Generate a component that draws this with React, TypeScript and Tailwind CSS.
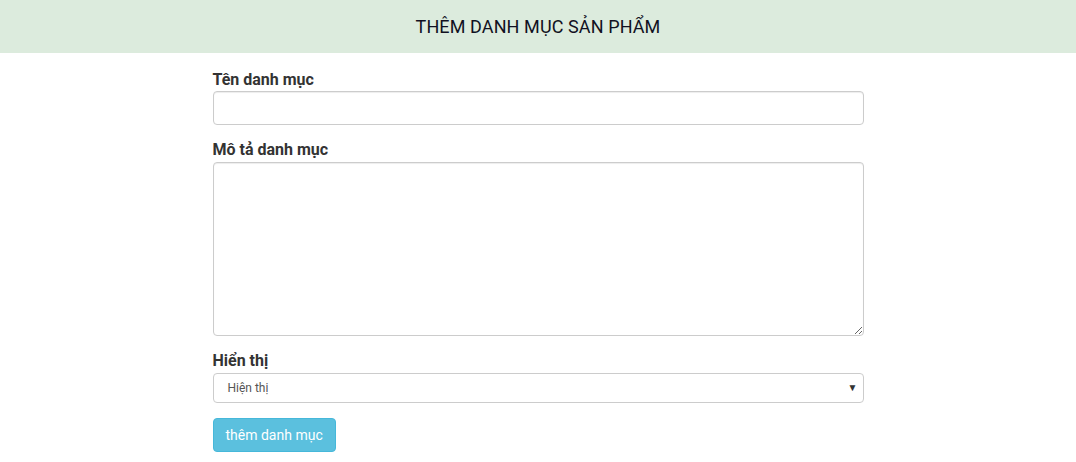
import React from "react";

export default function App() {
  return (
    <div className="min-h-[462px] bg-white" style={{ fontFamily: "Roboto, 'Noto Sans', sans-serif" }}>
      <header className="h-[53px] bg-[#dcebdd] flex items-center justify-center">
        <h1 className="text-[18px] text-[#111122] tracking-[0.1px] leading-none">THÊM DANH MỤC SẢN PHẨM</h1>
      </header>
      <main className="w-[651px] mx-auto pt-[17px]">
        <label className="block h-[20px] leading-[20px] text-[16px] font-bold text-[#333]">Tên danh mục</label>
        <input
          type="text"
          className="block mt-[1px] w-full h-[34px] border border-[#ccc] rounded-[4px] shadow-[inset_0_1px_1px_rgba(0,0,0,0.075)] px-3 text-[14px] outline-none"
        />
        <label className="block mt-[15px] h-[20px] leading-[20px] text-[16px] font-bold text-[#333]">Mô tả danh mục</label>
        <textarea className="block mt-[2px] w-full h-[174px] border border-[#ccc] rounded-[4px] shadow-[inset_0_1px_1px_rgba(0,0,0,0.075)] px-3 py-1.5 text-[14px] outline-none" />
        <label className="block mt-[15px] h-[20px] leading-[20px] text-[16px] font-bold text-[#333]">Hiển thị</label>
        <div className="mt-[2px] w-full h-[30px] border border-[#ccc] rounded-[4px] flex items-center justify-between pl-[14px] pr-[5px] bg-white">
          <span className="text-[12px] text-[#555]">Hiện thị</span>
          <span className="text-[10px] text-[#333] leading-none">▼</span>
        </div>
        <button className="mt-[15px] h-[34px] px-[12px] bg-[#5bc0de] border border-[#46b8da] rounded-[4px] text-white text-[14px]">
          thêm danh mục
        </button>
      </main>
    </div>
  );
}
